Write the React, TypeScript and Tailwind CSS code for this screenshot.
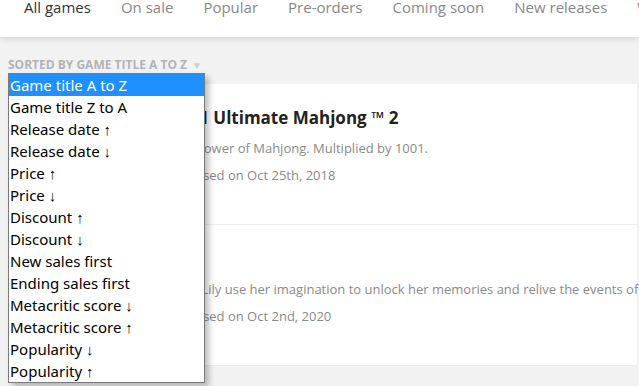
import React from "react";

const tabs = ["All games", "On sale", "Popular", "Pre-orders", "Coming soon", "New releases", "Wishlist"];

const sortOptions = [
  "Game title A to Z",
  "Game title Z to A",
  "Release date ↑",
  "Release date ↓",
  "Price ↑",
  "Price ↓",
  "Discount ↑",
  "Discount ↓",
  "New sales first",
  "Ending sales first",
  "Metacritic score ↓",
  "Metacritic score ↑",
  "Popularity ↓",
  "Popularity ↑",
];

const games = [
  {
    title: "1001 Ultimate Mahjong ™ 2",
    desc: "The power of Mahjong. Multiplied by 1001.",
    date: "Released on Oct 25th, 2018",
  },
  {
    title: "Lily",
    desc: "Help Lily use her imagination to unlock her memories and relive the events of her past.",
    date: "Released on Oct 2nd, 2020",
  },
];

export default function App() {
  return (
    <div className="relative w-[639px] h-[386px] overflow-hidden bg-[#f2f2f2] font-['Open_Sans',sans-serif]">
      {/* Tabs */}
      <div className="relative z-10 h-[37px] bg-white shadow-[0_2px_6px_rgba(0,0,0,0.12)]">
        <div className="flex gap-[30px] pl-[24px] whitespace-nowrap text-[15px] leading-[15px]">
          {tabs.map((t, i) => (
            <span key={t} className={i === 0 ? "text-[#333]" : "text-[#888]"}>
              {t}
            </span>
          ))}
        </div>
      </div>

      {/* Sort label */}
      <div className="h-[47px] pl-[8px] pt-[21px] flex items-start gap-[5px] text-[12px] leading-[14px] font-bold uppercase text-[#b3b3b3]">
        <span>Sorted by game title A to Z</span>
        <span className="text-[10px] text-[#d0d0d0]">▼</span>
      </div>

      {/* Game list */}
      <div className="ml-[8px] mr-[2px] bg-white">
        {games.map((g) => (
          <div key={g.title} className="h-[141px] pl-[162px] pt-[24px] border-b border-[#ececec] whitespace-nowrap">
            <div className="text-[17px] leading-[20px] font-bold text-[#222]">{g.title}</div>
            <div className="mt-[11px] text-[13px] leading-[18px] text-[#8a8a8a]">{g.desc}</div>
            <div className="mt-[9px] text-[13px] leading-[18px] text-[#8a8a8a]">{g.date}</div>
          </div>
        ))}
      </div>

      {/* Native-looking dropdown */}
      <div className="absolute left-[8px] top-[73px] w-[197px] bg-white border border-[#7a7a7a] shadow-[4px_4px_6px_rgba(0,0,0,0.25)] font-['Noto_Sans',sans-serif]">
        {sortOptions.map((o, i) => (
          <div
            key={o}
            className={
              "h-[22px] pl-[1px] text-[15px] leading-[22px] whitespace-nowrap " +
              (i === 0 ? "bg-[#1e90ff] text-white" : "text-black")
            }
          >
            {o}
          </div>
        ))}
      </div>
    </div>
  );
}
